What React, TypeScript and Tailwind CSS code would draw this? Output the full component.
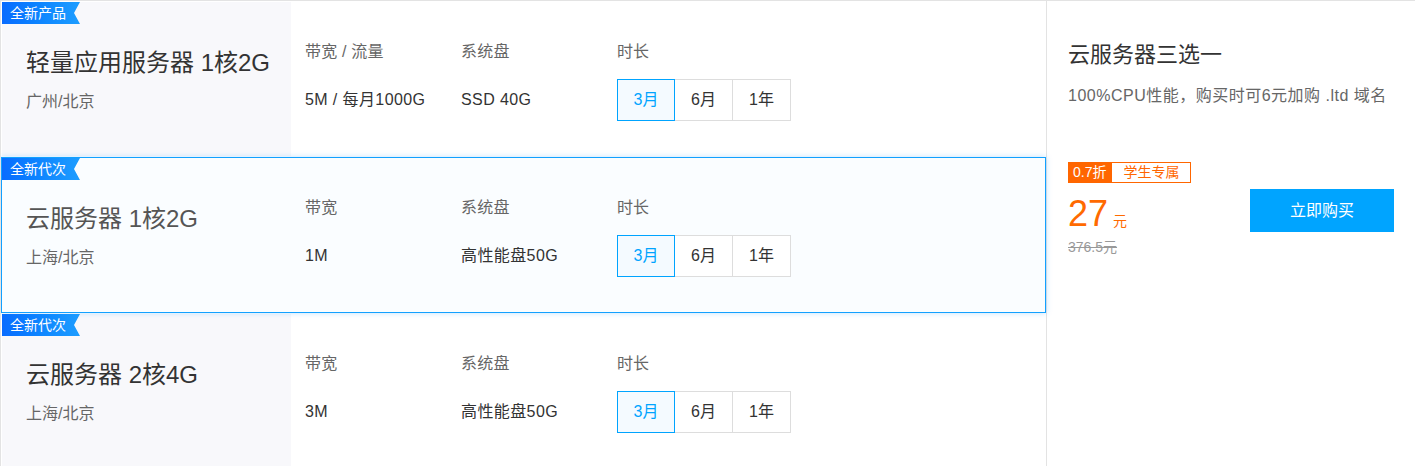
import React from "react";

type Row = {
  badge: string;
  title: string;
  loc: string;
  c1: [string, string];
  c2: [string, string];
  selected?: boolean;
};

const rows: Row[] = [
  { badge: "全新产品", title: "轻量应用服务器 1核2G", loc: "广州/北京", c1: ["带宽 / 流量", "5M / 每月1000G"], c2: ["系统盘", "SSD 40G"] },
  { badge: "全新代次", title: "云服务器 1核2G", loc: "上海/北京", c1: ["带宽", "1M"], c2: ["系统盘", "高性能盘50G"], selected: true },
  { badge: "全新代次", title: "云服务器 2核4G", loc: "上海/北京", c1: ["带宽", "3M"], c2: ["系统盘", "高性能盘50G"] },
];

const font = { fontFamily: '"Liberation Sans", Arial, "Noto Sans CJK SC", sans-serif' };

function Badge({ text }: { text: string }) {
  return (
    <div
      className="absolute left-0 top-0 h-[22px] w-[78px] pl-[8px] text-[14px] leading-[22px] text-white bg-gradient-to-r from-[#0a6cff] to-[#1e9dff]"
      style={{ clipPath: "polygon(0 0, 100% 0, calc(100% - 6px) 50%, 100% 100%, 0 100%)" }}
    >
      {text}
    </div>
  );
}

function RowView({ r }: { r: Row }) {
  return (
    <div
      className={
        "h-[156px] flex border " +
        (r.selected
          ? "border-[#12a0ff] bg-[#fafdff] shadow-[0_0_6px_rgba(0,140,255,0.25)] relative z-10"
          : "border-transparent")
      }
    >
      <div className={"relative w-[289px] shrink-0 pl-[24px] pt-[45px] " + (r.selected ? "" : "bg-[#f8f8fb]")}>
        <Badge text={r.badge} />
        <div className={"text-[24px] leading-[32px] " + (r.selected ? "text-[#555]" : "text-[#333]")}>{r.title}</div>
        <div className="mt-[11px] text-[16px] leading-[24px] text-[#666]">{r.loc}</div>
      </div>
      <div className="flex pl-[14px] pt-[38px]">
        {[r.c1, r.c2].map((c, i) => (
          <div key={i} className="w-[156px]">
            <div className="text-[16px] leading-[24px] text-[#666] tracking-[0.2px]">{c[0]}</div>
            <div className="mt-[15px] h-[42px] flex items-center text-[16px] text-[#333] tracking-[0.4px]">{c[1]}</div>
          </div>
        ))}
        <div className="w-[200px]">
          <div className="text-[16px] leading-[24px] text-[#666]">时长</div>
          <div className="mt-[15px] flex">
            <div className="w-[58px] h-[42px] flex items-center justify-center border border-[#00a4ff] bg-[#f4faff] text-[#00a4ff] text-[16px]">3月</div>
            <div className="w-[58px] h-[42px] flex items-center justify-center border border-l-0 border-[#dddddd] bg-white text-[#333] text-[16px]">6月</div>
            <div className="w-[58px] h-[42px] flex items-center justify-center border border-l-0 border-[#dddddd] bg-white text-[#333] text-[16px]">1年</div>
          </div>
        </div>
      </div>
    </div>
  );
}

export default function App() {
  return (
    <div className="w-[1415px] h-[466px] overflow-hidden bg-white flex border-t border-l border-[#e3e3e3]" style={font}>
      <div className="w-[1045px] shrink-0">
        {rows.map((r, i) => (
          <RowView key={i} r={r} />
        ))}
      </div>
      <div className="flex-1 border-l border-[#e3e3e3] pl-[21px] pr-[21px] pt-[39px]">
        <div className="text-[22px] leading-[30px] text-[#333]">云服务器三选一</div>
        <div className="mt-[14px] text-[16px] leading-[24px] text-[#666] tracking-[0.5px] whitespace-nowrap">100%CPU性能，购买时可6元加购 .ltd 域名</div>
        <div className="mt-[54px] flex justify-between items-start">
          <div>
            <div className="flex h-[21px]">
              <div className="bg-[#ff6600] text-white text-[14px] leading-[21px] px-[5px]">0.7折</div>
              <div className="border border-[#ff6600] text-[#ff6600] text-[14px] leading-[19px] px-[11px]">学生专属</div>
            </div>
            <div className="mt-[13px] flex items-baseline text-[#ff6a00]">
              <span className="text-[36px] leading-[36px]">27</span>
              <span className="ml-[5px] text-[14px]">元</span>
            </div>
            <div className="mt-[6px] text-[14px] leading-[18px] text-[#999] line-through">376.5元</div>
          </div>
          <div className="mt-[27px] w-[144px] h-[43px] bg-[#00a4ff] text-white text-[16px] flex items-center justify-center">立即购买</div>
        </div>
      </div>
    </div>
  );
}
